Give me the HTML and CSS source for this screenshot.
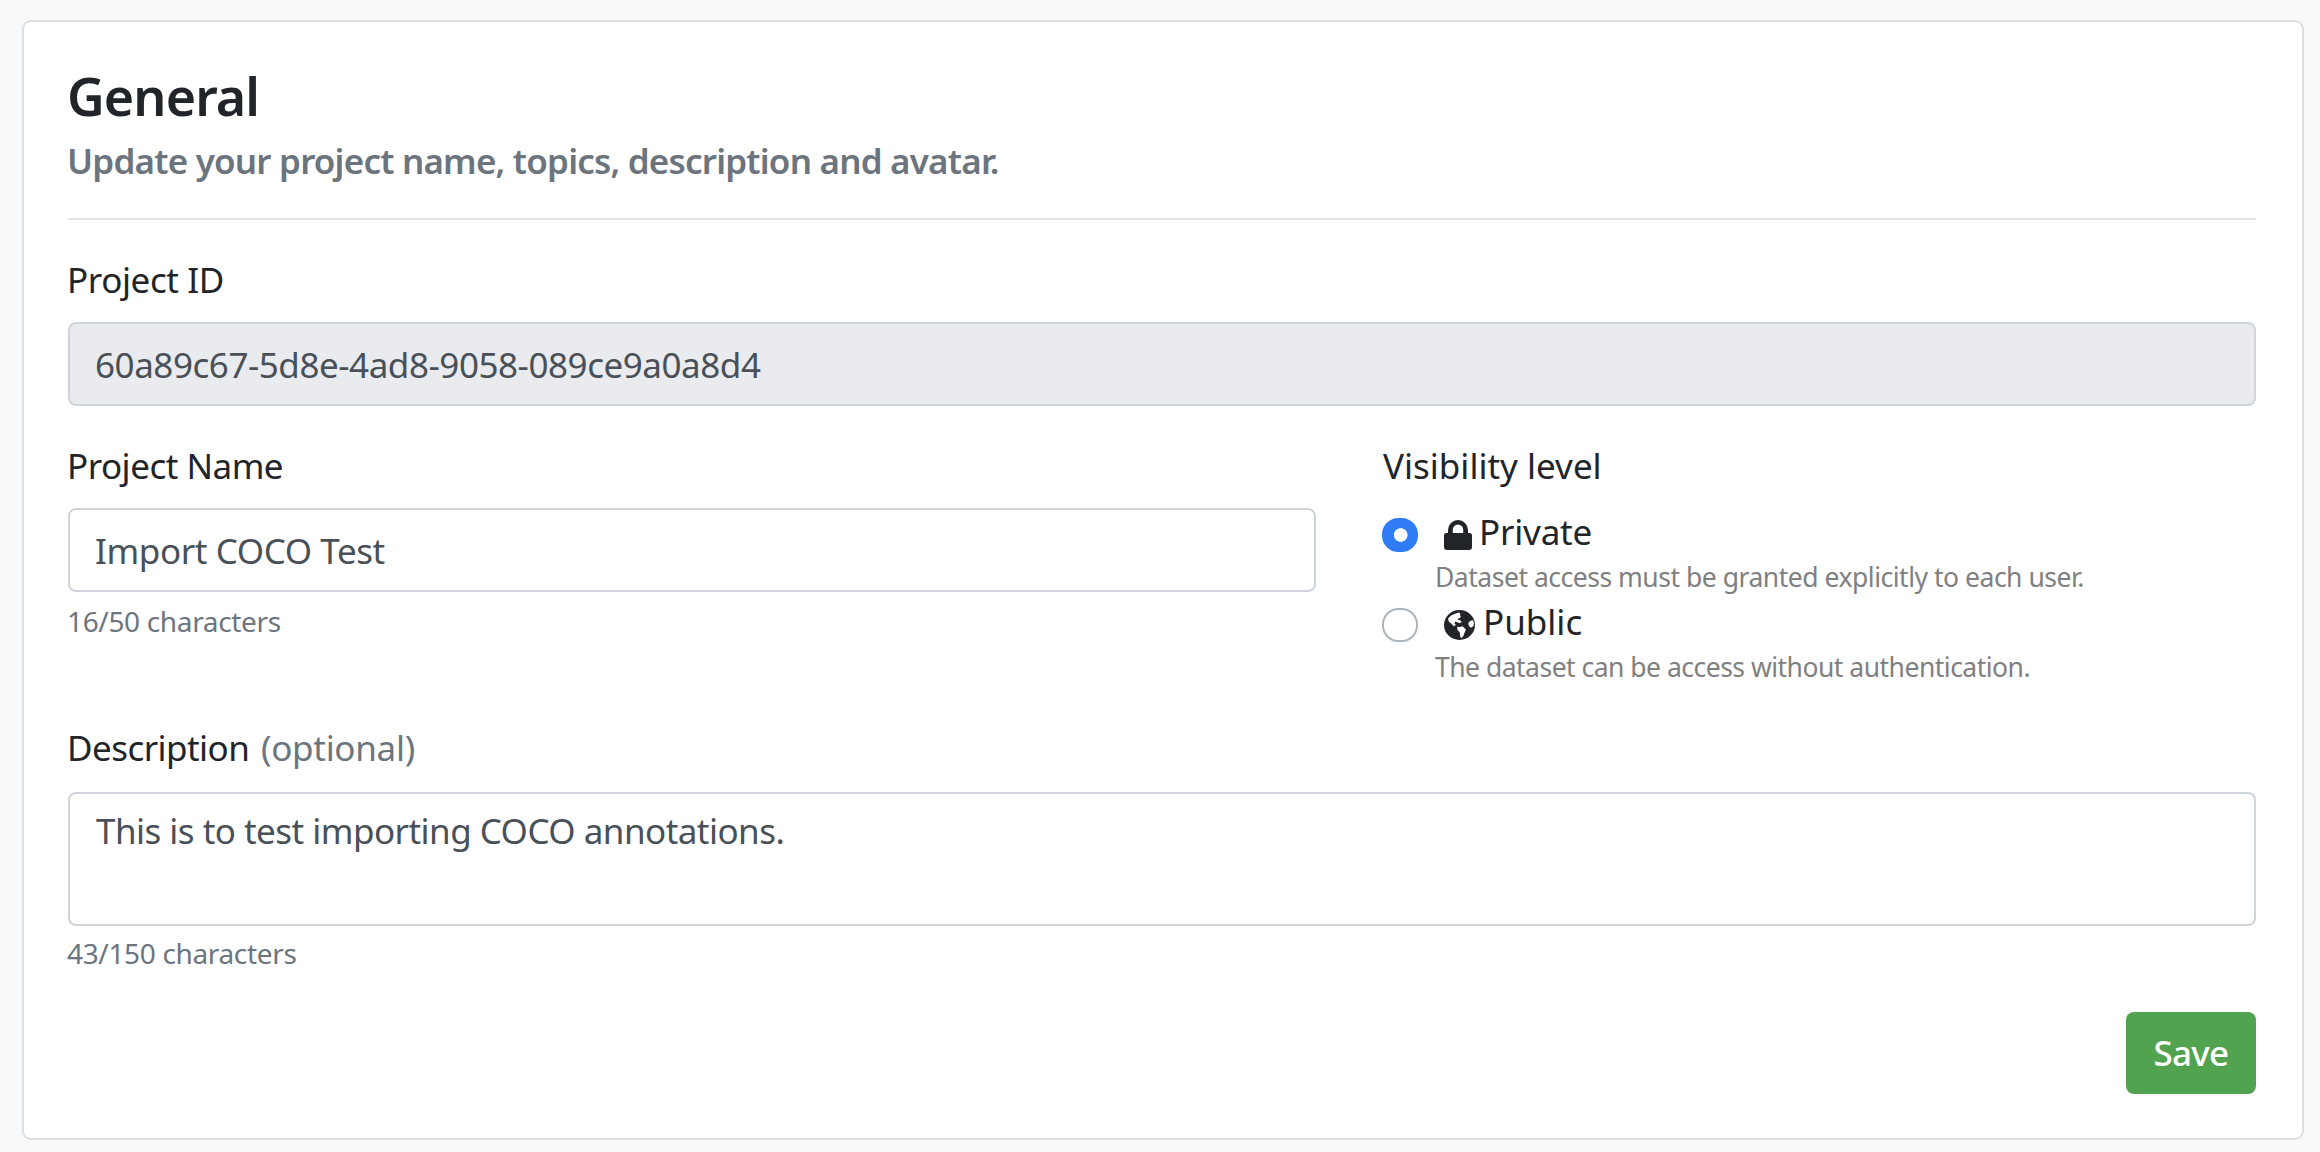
FILE: index.html
```html
<!DOCTYPE html>
<html lang="en">
<head>
<meta charset="utf-8">
<title>General settings</title>
<link rel="stylesheet" href="styles.css">
</head>
<body>
<main class="card">
  <h1 class="title">General</h1>
  <p class="subtitle">Update your project name, topics, description and avatar.</p>
  <hr class="divider">
  <form class="form">
    <div class="group">
      <label class="label label-id" for="pid">Project ID</label>
      <input class="control readonly" id="pid" readonly value="60a89c67-5d8e-4ad8-9058-089ce9a0a8d4">
    </div>
    <div class="row">
      <div class="group col-name">
        <label class="label label-name" for="name">Project Name</label>
        <input class="control name" id="name" value="Import COCO Test">
        <small class="hint hint-name">16/50 characters</small>
      </div>
      <div class="group col-visibility">
        <div class="label label-visibility">Visibility level</div>
        <label class="option option-private">
          <input class="radio" type="radio" name="visibility" checked>
          <svg class="icon lock" viewBox="0 0 28 30"><path fill-rule="evenodd" d="M4 13V10a10 10 0 0 1 20 0v3h1.500a2.500 2.500 0 0 1 2.500 2.500v11.500a3 3 0 0 1-3 3h-22a3 3 0 0 1-3-3v-11.500a2.500 2.500 0 0 1 2.500-2.500zM8.800 13h10.400v-3.200a5.200 5.200 0 0 0-10.400 0z"/></svg>
          <span>Private</span>
        </label>
        <small class="help">Dataset access must be granted explicitly to each user.</small>
        <label class="option option-public">
          <input class="radio" type="radio" name="visibility">
          <svg class="icon globe" viewBox="25 18 92 88" preserveAspectRatio="none"><ellipse cx="71" cy="62" rx="46" ry="44"/><path class="land" d="M37 43Q45 32 58 29L69 25Q75 27 73 34L75 39L68 43L65 46L74 49L78 54L70 56L59 52L56 57L60 62L54 66L47 58L39 52ZM64 67L72 68L80 66L90 75L86 85L82 95L76 101L73 96L72 84L65 77ZM111 48L102 50L97 57L99 65L105 70L112 66L114 57Z"/></svg>
          <span>Public</span>
        </label>
        <small class="help help-public">The dataset can be access without authentication.</small>
      </div>
    </div>
    <div class="group group-description">
      <label class="label" for="desc"><span class="label-description">Description</span><span class="optional">(optional)</span></label>
      <textarea class="control area" id="desc">This is to test importing COCO annotations.</textarea>
      <small class="hint hint-area">43/150 characters</small>
    </div>
    <div class="actions"><button class="save" type="button">Save</button></div>
  </form>
</main>
</body>
</html>
```
FILE: styles.css
```css
* { box-sizing: border-box; }
body {
  margin: 0;
  padding: 20px 16px 12px 22px;
  height: 1152px;
  background: #f8f9fb;
  color: #212529;
  font: 430 35px/54px "Noto Sans", sans-serif;
}
.card {
  height: 1120px;
  padding: 42px 46px 44px 44px;
  border: 2px solid #dfdfdf;
  border-radius: 9px;
  background: #fff;
}
.title {
  margin: 0 0 10px -1px;
  font-size: 52px;
  font-weight: 600;
  line-height: 64px;
  letter-spacing: -0.9px;
}
.subtitle {
  margin: 0 0 36px -1px;
  color: #6c757d;
  font-weight: 600;
  line-height: 46px;
  margin-bottom: 34px;
  letter-spacing: -0.8px;
}
.divider { margin: 0 0 33px; border: 0; height: 2px; background: #e4e4e4; }
.form, .group { display: flex; flex-direction: column; }
.label { display: flex; margin: 0 0 15px -1px; height: 54px; }
.label-id { letter-spacing: -0.4px; }
.label-name { letter-spacing: -0.5px; }
.label-visibility { margin: 0 0 12px 1px; letter-spacing: 0; }
.label-description { width: 194px; letter-spacing: -0.55px; }
.optional { color: #6c757d; letter-spacing: -0.3px; }
.control {
  width: 100%;
  height: 84px;
  padding: 0 25px;
  border: 2px solid #ced4da;
  border-radius: 8px;
  outline: none;
  background: #fff;
  color: #495057;
  font: inherit;
}
.readonly { background: #eaebef; letter-spacing: -0.45px; }
.name { letter-spacing: -0.4px; }
.area {
  display: block;
  height: 134px;
  padding: 10px 26px;
  resize: none;
  overflow: hidden;
  letter-spacing: -0.53px;
}
.hint {
  margin-left: -1px;
  color: #6c757d;
  font-size: 28px;
  line-height: 42px;
  letter-spacing: -0.34px;
}
.hint-name { margin-top: 8px; }
.hint-area { margin-top: 6px; }
.row {
  display: grid;
  grid-template-columns: 1248px 1fr;
  column-gap: 66px;
  margin-top: 33px;
}
.group-description { margin-top: 36px; }
.group-description .label { margin-bottom: 17px; }
.option { display: flex; height: 54px; }
.option-private { letter-spacing: -0.2px; }
.option-public { letter-spacing: 0; }
.radio {
  appearance: none;
  flex: none;
  width: 36px;
  height: 34px;
  margin: 13px 26px 0 0;
  border: 2px solid #adb5bd;
  border-radius: 16.500px;
  background: #fff;
}
.radio:checked {
  border-color: #307cf6;
  background: radial-gradient(circle at 16.700px 15px, #fff 6.400px, #307cf6 7.200px);
}
.icon { flex: none; fill: #212529; }
.lock { width: 28px; height: 30px; margin: 15px 7px 0 0; }
.globe { width: 31px; height: 30px; margin: 15px 8px 0 0; }
.land { fill: #fff; }
.help {
  margin-left: 53px;
  color: #808080;
  font-size: 26.500px;
  line-height: 36px;
  letter-spacing: -0.48px;
}
.help-public { letter-spacing: -0.51px; }
.actions { display: flex; justify-content: flex-end; margin-top: 38px; }
.save {
  width: 130px;
  height: 82px;
  padding: 0;
  border: 0;
  border-radius: 8px;
  background: #52a350;
  color: #fff;
  font: inherit;
  font-weight: 500;
  letter-spacing: -0.7px;
}
```
